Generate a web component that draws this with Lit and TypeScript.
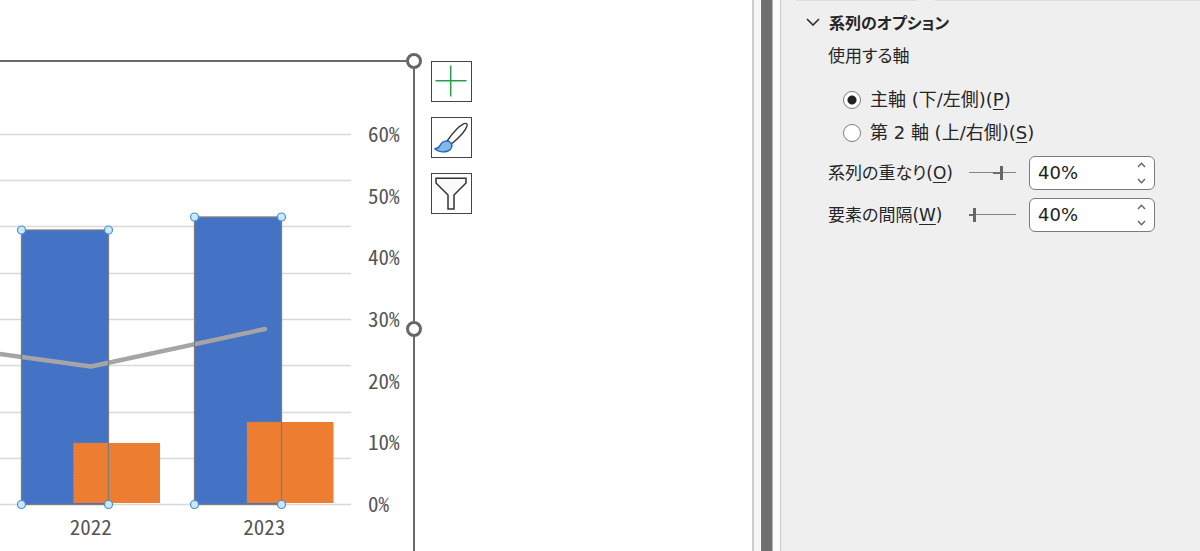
import { LitElement, html, svg, css } from "lit";
import { customElement, property, state } from "lit/decorators.js";

interface Bar {
  year: string;
  left: number;
  top: number;
  shareLeft: number;
  shareTop: number;
}

const BASELINE = 504;
const BAR_WIDTH = 87;
const BARS: Bar[] = [
  { year: "2022", left: 21.5, top: 230, shareLeft: 73.5, shareTop: 443 },
  { year: "2023", left: 194.5, top: 217, shareLeft: 247, shareTop: 422 },
];
const GRID = [134, 180, 226, 273, 319, 365, 412, 458, 504];
const PERCENTS = ["60%", "50%", "40%", "30%", "20%", "10%", "0%"];

@customElement("combo-chart")
export class ComboChart extends LitElement {
  static styles = css`
    :host {
      display: flex;
      align-items: stretch;
      flex: 1;
      min-width: 0;
      padding-top: 60px;
      gap: 16px;
      background: #fff;
      color: #555;
      font: 21px/24px "Noto Sans CJK JP", sans-serif;
      font-feature-settings: "hwid";
    }
    .frame {
      position: relative;
      display: grid;
      grid-template-columns: 351px 49px;
      grid-template-rows: auto 1fr;
      padding-right: 13px;
      border-top: 2px solid #6a6a6a;
      border-right: 2px solid #6a6a6a;
    }
    .plot {
      display: block;
      overflow: visible;
    }
    .axis {
      display: flex;
      flex-direction: column;
      justify-content: space-between;
      box-sizing: border-box;
      height: 453px;
      margin: 0;
      padding: 59px 0 0 17px;
      list-style: none;
    }
    .years {
      display: grid;
      grid-template-columns: 1fr 1fr;
      padding: 4px 0 0 4px;
      text-align: center;
    }
    .grip {
      position: absolute;
      right: -9px;
      width: 10px;
      height: 10px;
      border: 3px solid #666;
      border-radius: 50%;
      background: #fff;
    }
    .grip.corner {
      top: -9px;
    }
    .grip.side {
      top: 259px;
    }
    .tools {
      display: flex;
      flex-direction: column;
      gap: 15px;
      padding-top: 1px;
    }
    .tool {
      width: 41px;
      height: 41px;
      padding: 0;
      border: 1px solid #444;
      background: #fff;
    }
    .tool svg {
      display: block;
    }
  `;

  private renderBar(b: Bar) {
    return svg`
      <rect x=${b.left} y=${b.top} width=${BAR_WIDTH} height=${BASELINE - b.top} fill="#4472c4"></rect>
      <rect x=${b.shareLeft} y=${b.shareTop} width="86.5" height=${503 - b.shareTop} fill="#ed7d31"></rect>
      <path d="M${b.shareLeft} 503V${b.shareTop}H${b.left + BAR_WIDTH}" fill="none" stroke="#a88568" stroke-dasharray="1.5 1.5"></path>`;
  }

  private renderOutline(b: Bar) {
    const right = b.left + BAR_WIDTH;
    const dots = [
      [b.left, b.top],
      [right, b.top],
      [b.left, BASELINE + 0.5],
      [right, BASELINE + 0.5],
    ];
    return svg`
      <rect x=${b.left} y=${b.top} width=${BAR_WIDTH} height=${BASELINE + 0.5 - b.top} fill="none" stroke="#7d7d7d" stroke-width="1.3"></rect>
      ${dots.map(
        ([x, y]) => svg`<circle cx=${x} cy=${y} r="4" fill="#cfe6f7" stroke="#3d93dc" stroke-width="1.2"></circle>`
      )}`;
  }

  render() {
    return html`
      <div class="frame">
        <div class="main">
          <svg class="plot" width="351" height="448" viewBox="0 62 351 448" role="img" aria-label="2022 / 2023">
            ${GRID.map((y) => svg`<path d="M0 ${y + 0.5}H351" stroke="#d9d9d9" stroke-width="1.4"></path>`)}
            ${BARS.map((b) => this.renderBar(b))}
            <path d="M-4 353.5L91 366.5L265 329" fill="none" stroke="#a5a5a5" stroke-width="4.4" stroke-linecap="round" stroke-linejoin="round"></path>
            ${BARS.map((b) => this.renderOutline(b))}
          </svg>
          <div class="years">${BARS.map((b) => html`<span>${b.year}</span>`)}</div>
        </div>
        <ul class="axis">
          ${PERCENTS.map((p) => html`<li>${p}</li>`)}
        </ul>
        <span class="grip corner"></span>
        <span class="grip side"></span>
      </div>
      <div class="tools">
        <button class="tool" aria-label="グラフ要素">
          <svg width="39" height="39" viewBox="0 0 39 39" fill="none" stroke="#2a9d48" stroke-width="1.5">
            <path d="M18.700 3.500V34.500M3.500 18.700H34.500"></path>
          </svg>
        </button>
        <button class="tool" aria-label="グラフ スタイル">
          <svg width="39" height="39" viewBox="0 0 39 39" stroke-width="1.4" stroke-linejoin="round">
            <path d="M15.500 22.500C20 16 26.500 8.500 32 5.700C34 4.800 35.600 5.800 35 8C33.500 13 25.500 21 19.500 26Z" fill="#fff" stroke="#3a3a3a"></path>
            <path d="M2.800 30.800C7 30.800 7.300 28.300 9 25.800C11 23 15.500 21.800 18.300 24.300C21.300 27.200 19.800 31.500 16 33C11.500 34.700 6 33.800 2.800 30.800Z" fill="#83b9ea" stroke="#2468b8"></path>
          </svg>
        </button>
        <button class="tool" aria-label="グラフ フィルター">
          <svg width="39" height="39" viewBox="0 0 39 39" fill="#fafafa" stroke="#333" stroke-width="1.5">
            <path d="M4 4.200H34V9L22 21V35H16V21L4 9Z"></path>
          </svg>
        </button>
      </div>
    `;
  }
}

@customElement("percent-field")
export class PercentField extends LitElement {
  static styles = css`
    :host {
      display: grid;
      grid-template-columns: 141px 47px 139px;
      align-items: center;
    }
    .name {
      white-space: nowrap;
    }
    .slider {
      appearance: none;
      width: 47px;
      height: 14px;
      margin: 0;
      background-color: transparent;
      background-image: linear-gradient(#6a6a6a, #6a6a6a), linear-gradient(#858585, #858585);
      background-repeat: no-repeat;
      background-position: var(--from) 6px, 0 6px;
      background-size: var(--span) 2px, 100% 1px;
    }
    .slider::-webkit-slider-thumb {
      appearance: none;
      width: 3px;
      height: 14px;
      background: #666;
    }
    .spin {
      box-sizing: border-box;
      display: flex;
      height: 34px;
      margin-left: 13px;
      border: 1px solid #7c7c7c;
      border-radius: 6px;
      background: #fff;
      overflow: hidden;
    }
    .value {
      flex: 1;
      min-width: 0;
      padding: 0 0 0 8px;
      border: 0;
      background: none;
      outline: none;
      color: #222;
      font: 18px/32px "DejaVu Sans", sans-serif;
    }
    .steps {
      display: flex;
      flex-direction: column;
      width: 25px;
    }
    .step {
      display: grid;
      place-items: center;
      flex: 1;
      padding: 0;
      border: 0;
      background: none;
    }
    u {
      text-decoration-thickness: 1px;
      text-underline-offset: 3px;
    }
  `;

  @property() label = "";
  @property() key = "";
  @property({ type: Number }) min = 0;
  @property({ type: Number }) max = 100;
  @property({ type: Number }) value = 0;

  private step(delta: number) {
    this.value = Math.min(this.max, Math.max(this.min, this.value + delta));
  }

  render() {
    const width = 47;
    const at = (v: number) => ((v - this.min) / (this.max - this.min)) * width;
    const from = Math.round(Math.min(at(0), at(this.value)));
    const span = Math.round(Math.abs(at(this.value) - at(0)));
    return html`
      <label class="name" for="value">${this.label}(<u>${this.key}</u>)</label>
      <input
        class="slider"
        type="range"
        aria-label=${this.label}
        min=${this.min}
        max=${this.max}
        .value=${String(this.value)}
        style="--from:${from}px;--span:${span}px"
        @input=${(e: Event) => (this.value = Number((e.target as HTMLInputElement).value))}
      />
      <div class="spin">
        <input class="value" id="value" type="text" .value=${`${this.value}%`} />
        <div class="steps">
          <button class="step" aria-label="増やす" @click=${() => this.step(1)}>
            <svg width="9" height="6" viewBox="0 0 9 6" fill="none" stroke="#666" stroke-width="1.4"><path d="M1 5L4.500 1.300L8 5"></path></svg>
          </button>
          <button class="step" aria-label="減らす" @click=${() => this.step(-1)}>
            <svg width="9" height="6" viewBox="0 0 9 6" fill="none" stroke="#666" stroke-width="1.4"><path d="M1 1L4.500 4.700L8 1"></path></svg>
          </button>
        </div>
      </div>
    `;
  }
}

@customElement("app-root")
export class AppRoot extends LitElement {
  static styles = css`
    :host {
      display: flex;
      min-height: 100vh;
      background: #fff;
    }
    .scroll {
      box-sizing: border-box;
      width: 8px;
      margin-right: 1px;
      border-left: 2px solid #cdcdcd;
      background: #f5f5f5;
    }
    .divider {
      width: 11px;
      border-right: 1px solid #b5b5b5;
      background: #6f6f6f;
    }
    .edge {
      width: 7px;
      border-right: 1px solid #cacaca;
      background: #fafafa;
    }
    .panel {
      box-sizing: border-box;
      width: 419px;
      background: #efefef;
      color: #262626;
      font: 17px/24px "DejaVu Sans", "Noto Sans CJK JP", sans-serif;
      font-feature-settings: "palt";
    }
    .tabs {
      display: grid;
      grid-template-columns: 121px 1fr;
      gap: 18px;
      padding: 0 0 0 15px;
    }
    .tab {
      height: 1px;
      background: #dcdcdc;
    }
    .title {
      display: flex;
      align-items: center;
      gap: 9px;
      margin: 9px 0 0;
      padding: 0 0 0 25px;
      border: 0;
      background: none;
      color: inherit;
      font: bold 16px/24px "Noto Sans CJK JP", sans-serif;
      font-feature-settings: "palt";
    }
    .body {
      padding: 10px 0 0 47px;
    }
    .group {
      min-width: 0;
      margin: 0;
      padding: 0;
      border: 0;
    }
    .legend {
      padding: 0;
    }
    .choice {
      display: flex;
      align-items: center;
      gap: 9px;
      height: 24px;
      margin-top: 9px;
      padding-left: 15px;
      font-size: 18px;
    }
    .choice.first {
      margin-top: 20px;
    }
    .radio {
      appearance: none;
      box-sizing: border-box;
      width: 18px;
      height: 18px;
      margin: 0;
      border: 1px solid #7c7c7c;
      border-radius: 50%;
      background: #fff;
    }
    .radio:checked {
      background: radial-gradient(circle, #222 4px, #fff 5px);
    }
    .fields {
      display: grid;
      gap: 8px;
      margin-top: 11px;
    }
    u {
      text-decoration-thickness: 1px;
      text-underline-offset: 3px;
    }
  `;

  @state() private axis = "primary";

  render() {
    return html`
      <combo-chart></combo-chart>
      <div class="scroll"></div>
      <div class="divider"></div>
      <div class="edge"></div>
      <aside class="panel">
        <div class="tabs"><span class="tab"></span><span class="tab"></span></div>
        <button class="title" aria-expanded="true">
          <svg width="14" height="8" viewBox="0 0 14 8" fill="none" stroke="#333" stroke-width="1.7"><path d="M1 1L7 7L13 1"></path></svg>
          系列のオプション
        </button>
        <div class="body">
          <fieldset class="group">
            <legend class="legend">使用する軸</legend>
            <label class="choice first">
              <input class="radio" type="radio" name="axis" .checked=${this.axis === "primary"} @change=${() => (this.axis = "primary")} />
              <span>主軸 (下/左側)(<u>P</u>)</span>
            </label>
            <label class="choice">
              <input class="radio" type="radio" name="axis" .checked=${this.axis === "secondary"} @change=${() => (this.axis = "secondary")} />
              <span>第 2 軸 (上/右側)(<u>S</u>)</span>
            </label>
          </fieldset>
          <div class="fields">
            <percent-field label="系列の重なり" key="O" min="-100" max="100" value="40"></percent-field>
            <percent-field label="要素の間隔" key="W" min="0" max="500" value="40"></percent-field>
          </div>
        </div>
      </aside>
    `;
  }
}
